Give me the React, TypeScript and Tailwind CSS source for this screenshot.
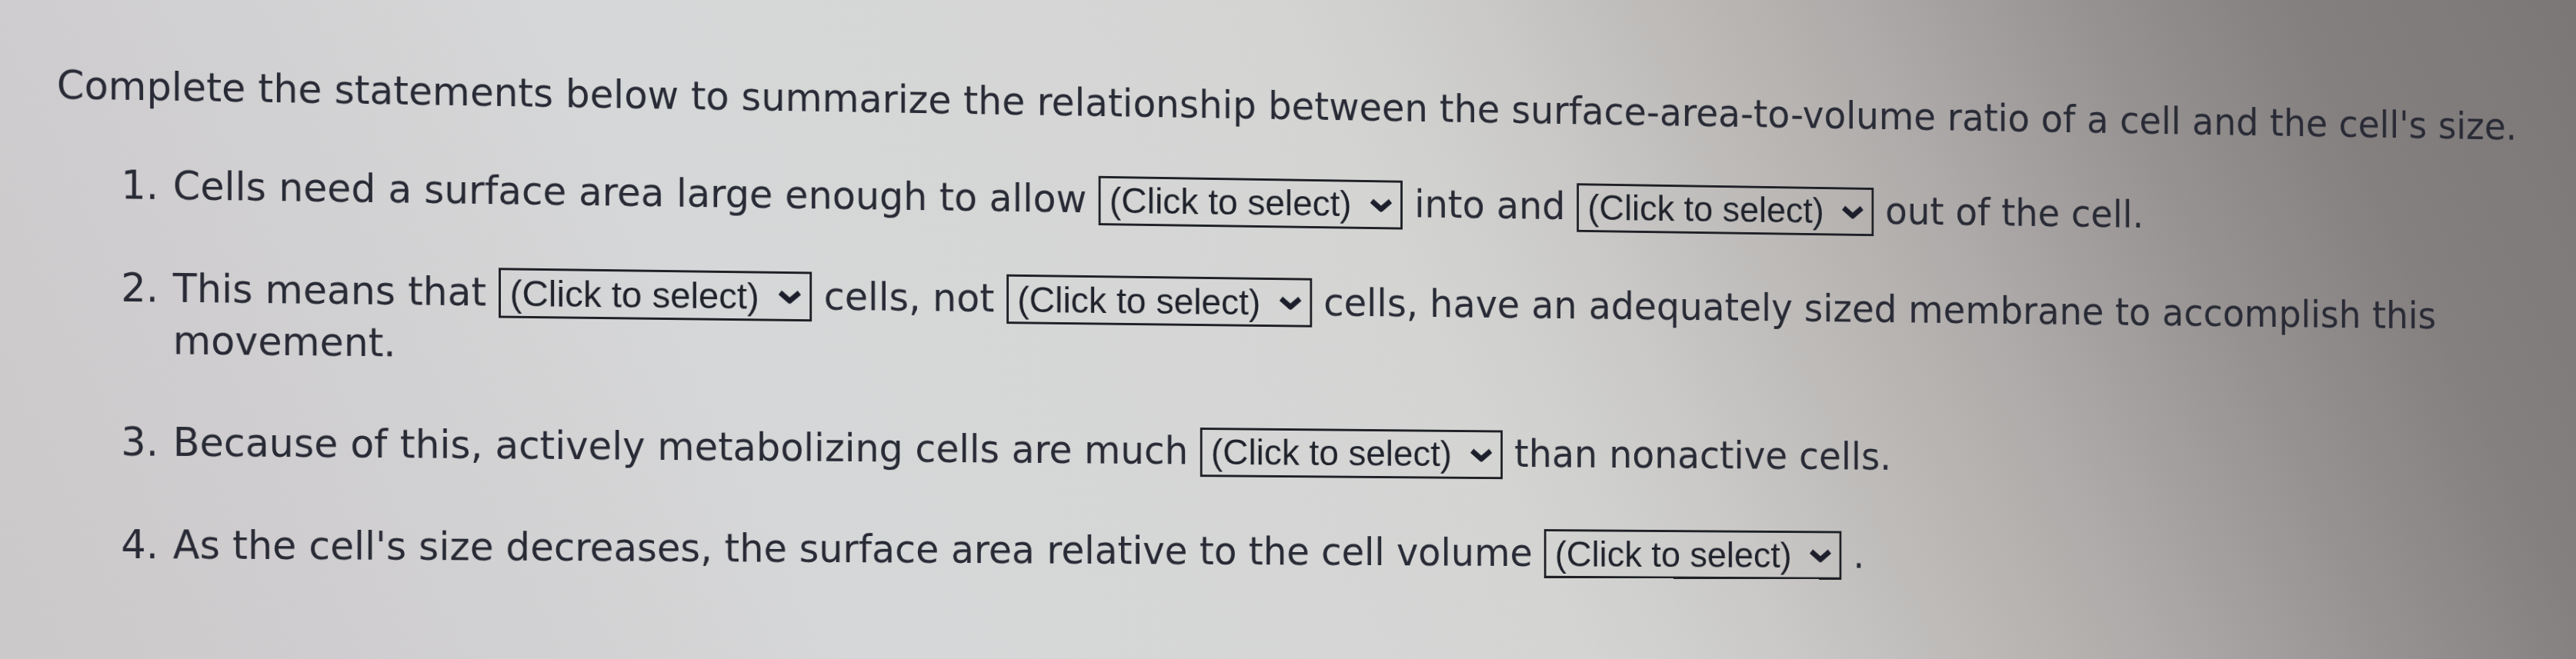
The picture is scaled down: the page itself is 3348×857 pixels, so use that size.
import type { ReactNode } from 'react'

// drop-down placeholder used inside the sentences
function Picker() {
  return (
    <span className="inline-flex items-center w-[421px] h-[66px] border-[3px] border-[#1e2026] pl-[12px] pr-[11px] text-[#1f222b] font-['Liberation_Sans',Arial,sans-serif]">
      <span className="text-[49px] leading-none whitespace-nowrap">(Click to select)</span>
      <svg className="ml-auto w-[32px] h-[22px]" viewBox="0 0 32 22" fill="none">
        <path d="M3 6 L16 17 L29 6" stroke="#1c1f2b" strokeWidth="7" strokeLinejoin="round" />
      </svg>
    </span>
  )
}

function Item({ n, children }: { n: number; children: ReactNode }) {
  return (
    <li className="flex">
      <span className="w-[68px] shrink-0">{n}.</span>
      <span className="w-[3230px]">{children}</span>
    </li>
  )
}

export default function App() {
  return (
    <div className="w-[3348px] h-[857px] overflow-hidden bg-[linear-gradient(65deg,#cbc9c9_0%,#cfcdcf_12%,#d6d7d8_30%,#d4d5d3_55%,#cac9c7_62%,#b9b6b4_70%,#adaaa9_75%,#969291_83%,#858080_90%,#7b7777_100%)]">
      <div className="w-[3600px] pt-[75px] pl-[74px] text-[51.4px] leading-[68px] text-[#282a35] font-['DejaVu_Sans',Verdana,sans-serif] origin-[0_1025px] [transform:perspective(3000px)_rotateY(3.2deg)]">
        <p className="whitespace-nowrap">
          Complete the statements below to summarize the relationship between the surface-area-to-volume ratio of a cell and the cell's size.
        </p>
        <ol className="mt-[61px] pl-[84px] space-y-[65px]">
          <Item n={1}>
            Cells need a surface area large enough to allow <Picker /> into and <Picker /> out of the cell.
          </Item>
          <Item n={2}>
            This means that <Picker /> cells, not <Picker /> cells, have an adequately sized membrane to accomplish this movement.
          </Item>
          <Item n={3}>
            Because of this, actively metabolizing cells are much <Picker /> than nonactive cells.
          </Item>
          <Item n={4}>
            As the cell's size decreases, the surface area relative to the cell volume <Picker /> .
          </Item>
        </ol>
      </div>
    </div>
  )
}
